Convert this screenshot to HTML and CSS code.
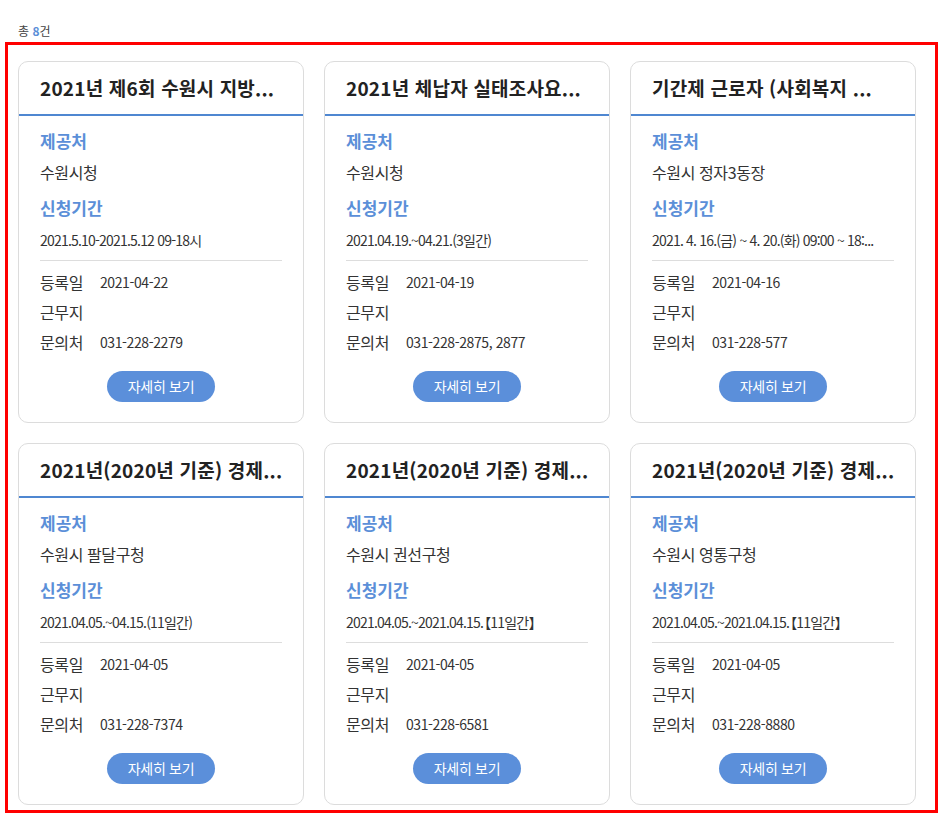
FILE: index.html
```html
<!DOCTYPE html>
<html lang="ko">
<head>
<meta charset="utf-8">
<title>채용공고</title>
<link rel="stylesheet" href="styles.css">
</head>
<body>
<div class="wrap">
  <p class="total">총 <em>8</em>건</p>
  <ul class="card-list">
    <li class="card">
      <div class="card-head"><h3>2021년 제6회 수원시 지방...</h3></div>
      <div class="card-body">
        <dl class="info">
          <dt>제공처</dt><dd>수원시청</dd>
          <dt>신청기간</dt><dd class="date">2021.5.10-2021.5.12 09-18시</dd>
        </dl>
        <ul class="meta">
          <li><span class="label">등록일</span><span class="value">2021-04-22</span></li>
          <li><span class="label">근무지</span><span class="value"></span></li>
          <li><span class="label">문의처</span><span class="value">031-228-2279</span></li>
        </ul>
        <a class="btn" href="#">자세히 보기</a>
      </div>
    </li>
    <li class="card">
      <div class="card-head"><h3>2021년 체납자 실태조사요...</h3></div>
      <div class="card-body">
        <dl class="info">
          <dt>제공처</dt><dd>수원시청</dd>
          <dt>신청기간</dt><dd class="date">2021.04.19.~04.21.(3일간)</dd>
        </dl>
        <ul class="meta">
          <li><span class="label">등록일</span><span class="value">2021-04-19</span></li>
          <li><span class="label">근무지</span><span class="value"></span></li>
          <li><span class="label">문의처</span><span class="value">031-228-2875, 2877</span></li>
        </ul>
        <a class="btn" href="#">자세히 보기</a>
      </div>
    </li>
    <li class="card">
      <div class="card-head"><h3>기간제 근로자 (사회복지 ...</h3></div>
      <div class="card-body">
        <dl class="info">
          <dt>제공처</dt><dd>수원시 정자3동장</dd>
          <dt>신청기간</dt><dd class="date">2021. 4. 16.(금) ~ 4. 20.(화) 09:00 ~ 18:...</dd>
        </dl>
        <ul class="meta">
          <li><span class="label">등록일</span><span class="value">2021-04-16</span></li>
          <li><span class="label">근무지</span><span class="value"></span></li>
          <li><span class="label">문의처</span><span class="value">031-228-577</span></li>
        </ul>
        <a class="btn" href="#">자세히 보기</a>
      </div>
    </li>
    <li class="card">
      <div class="card-head"><h3>2021년(2020년 기준) 경제...</h3></div>
      <div class="card-body">
        <dl class="info">
          <dt>제공처</dt><dd>수원시 팔달구청</dd>
          <dt>신청기간</dt><dd class="date">2021.04.05.~04.15.(11일간)</dd>
        </dl>
        <ul class="meta">
          <li><span class="label">등록일</span><span class="value">2021-04-05</span></li>
          <li><span class="label">근무지</span><span class="value"></span></li>
          <li><span class="label">문의처</span><span class="value">031-228-7374</span></li>
        </ul>
        <a class="btn" href="#">자세히 보기</a>
      </div>
    </li>
    <li class="card">
      <div class="card-head"><h3>2021년(2020년 기준) 경제...</h3></div>
      <div class="card-body">
        <dl class="info">
          <dt>제공처</dt><dd>수원시 권선구청</dd>
          <dt>신청기간</dt><dd class="date">2021.04.05.~2021.04.15.<span class="bracket">【11일간】</span></dd>
        </dl>
        <ul class="meta">
          <li><span class="label">등록일</span><span class="value">2021-04-05</span></li>
          <li><span class="label">근무지</span><span class="value"></span></li>
          <li><span class="label">문의처</span><span class="value">031-228-6581</span></li>
        </ul>
        <a class="btn" href="#">자세히 보기</a>
      </div>
    </li>
    <li class="card">
      <div class="card-head"><h3>2021년(2020년 기준) 경제...</h3></div>
      <div class="card-body">
        <dl class="info">
          <dt>제공처</dt><dd>수원시 영통구청</dd>
          <dt>신청기간</dt><dd class="date">2021.04.05.~2021.04.15.<span class="bracket">【11일간】</span></dd>
        </dl>
        <ul class="meta">
          <li><span class="label">등록일</span><span class="value">2021-04-05</span></li>
          <li><span class="label">근무지</span><span class="value"></span></li>
          <li><span class="label">문의처</span><span class="value">031-228-8880</span></li>
        </ul>
        <a class="btn" href="#">자세히 보기</a>
      </div>
    </li>
  </ul>
</div>
</body>
</html>
```

FILE: styles.css
```css
* {
  box-sizing: border-box;
}

html, body {
  margin: 0;
  padding: 0;
  background: #fff;
}

body {
  font-family: "Noto Sans CJK KR", "Noto Sans", sans-serif;
  color: #333;
}

.wrap {
  width: 948px;
}

.total {
  margin: 0;
  padding: 22px 0 0 18px;
  font-size: 12px;
  line-height: 18px;
  color: #444;
}

.total em {
  font-style: normal;
  font-weight: 700;
  color: #5b8fd8;
}

.card-list {
  list-style: none;
  margin: 2px 0 0 5px;
  width: 933px;
  height: 771px;
  padding: 16px 0 0 10px;
  border: 3px solid #ff0000;
  display: grid;
  grid-template-columns: repeat(3, 286px);
  column-gap: 20px;
  row-gap: 20px;
  align-content: start;
}

.card {
  border: 1px solid #dcdcdc;
  border-radius: 10px;
  background: #fff;
}

.card-head {
  height: 54px;
  border-bottom: 2px solid #4f87d1;
  padding: 0 21px;
  display: flex;
  align-items: center;
}

.card-head h3 {
  margin: 0;
  font-size: 19px;
  font-weight: 700;
  color: #222;
  white-space: nowrap;
  line-height: 26px;
  letter-spacing: 0.2px;
}

.card-body {
  padding: 0 21px 20px;
  display: flex;
  flex-direction: column;
}

.info {
  margin: 0;
}

.info dt {
  margin-top: 12px;
  font-size: 17px;
  font-weight: 700;
  line-height: 26px;
  color: #5b8fd8;
  letter-spacing: 0;
}

.info dd {
  margin: 7px 0 0;
  font-size: 16px;
  font-weight: 400;
  line-height: 22px;
  color: #333;
  letter-spacing: -0.4px;
  white-space: nowrap;
}

.info dd.date {
  margin-top: 8px;
  font-size: 14px;
  letter-spacing: -0.8px;
}

.info .bracket {
  margin-left: -6px;
}

.meta {
  list-style: none;
  margin: 9px 0 0;
  padding: 6px 0 0;
  border-top: 1px solid #dddddd;
}

.meta li {
  display: flex;
  line-height: 30px;
  height: 30px;
  font-size: 16px;
  font-weight: 400;
  color: #333;
}

.meta .label {
  width: 60px;
  letter-spacing: -0.4px;
}

.meta .value {
  font-size: 14px;
  letter-spacing: -0.4px;
}

.btn {
  align-self: center;
  margin-top: 14px;
  width: 108px;
  height: 31px;
  border-radius: 16px;
  background: #5b8fda;
  color: #fff;
  font-size: 14px;
  line-height: 31px;
  text-align: center;
  text-decoration: none;
  letter-spacing: -0.3px;
}
```
